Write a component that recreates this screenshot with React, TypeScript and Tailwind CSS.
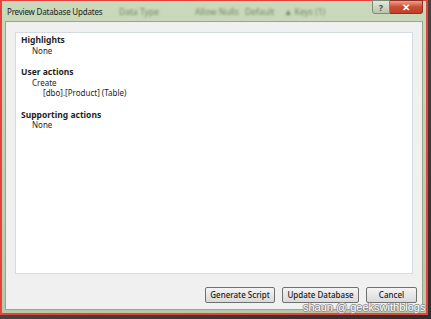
import React from "react";

export default function App() {
  const font = { fontFamily: '"Noto Sans", "Open Sans", sans-serif' };
  const btn =
    "h-[16px] rounded-[2px] border border-[#707070] bg-gradient-to-b from-[#f4f4f4] to-[#dadada] text-[8px] font-medium text-[#1a1a1a] leading-none whitespace-nowrap";
  return (
    <div
      className="relative w-[431px] h-[319px] overflow-hidden bg-gradient-to-br from-[#5a5a5a] to-[#2e2e2e]"
      style={font}
    >
      {/* window */}
      <div className="absolute left-0 top-0 w-[428px] h-[315px] border-x-2 border-b-2 border-t border-[#e8413c] bg-gradient-to-b from-[#c9d9ba] to-[#b8c9a8] flex flex-col">
        {/* title bar */}
        <div className="relative h-[20px] shrink-0 flex items-center pl-[5px]">
          <div className="absolute inset-0 pointer-events-none text-[8.5px] text-[#3b4a35] opacity-60 blur-[1.2px] whitespace-nowrap">
            <span className="absolute left-[117px] top-[5px]">Data Type</span>
            <span className="absolute left-[193px] top-[5px]">Allow Nulls</span>
            <span className="absolute left-[243px] top-[5px]">Default</span>
            <span className="absolute left-[282px] top-[5px]">▲ Keys (1)</span>
          </div>
          <span className="relative text-[8px] tracking-[-0.2px] text-[#1a1a1a] leading-none mt-[1px] whitespace-nowrap">
            Preview Database Updates
          </span>
          <div className="absolute top-[-1px] right-[3px] flex">
            <div className="w-[18px] h-[14px] rounded-bl-[3px] border border-[#7d8a73] bg-gradient-to-b from-[#e2e9dc] to-[#b9c4b0] flex items-center justify-center text-[9px] font-bold text-[#4b4b4b] leading-none">
              ?
            </div>
            <div className="w-[33px] h-[14px] rounded-br-[3px] border border-l-0 border-[#8a3324] bg-gradient-to-b from-[#e8a08e] via-[#cc4b33] to-[#c2412a] flex items-center justify-center text-[10px] font-bold text-white leading-none">
              ✕
            </div>
          </div>
        </div>
        {/* dialog body */}
        <div className="flex-1 mx-[3px] mb-[3px] bg-[#f0f0f0] border border-[#97a58c] flex flex-col">
          <div className="mx-[9px] mt-[10px] h-[242px] bg-white border border-[#d5dbe4] px-[5px] pt-[2px] text-[8px] leading-[10.5px] text-[#1e1e1e] whitespace-nowrap">
            <div className="font-bold text-[8.5px]">Highlights</div>
            <div className="pl-[11px]">None</div>
            <div className="font-bold text-[8.5px] mt-[11px]">User actions</div>
            <div className="pl-[11px]">Create</div>
            <div className="pl-[22px]">[dbo].[Product] (Table)</div>
            <div className="font-bold text-[8.5px] mt-[11px]">Supporting actions</div>
            <div className="pl-[11px]">None</div>
          </div>
          <div className="flex justify-end gap-[7px] pr-[5px] mt-[13px]">
            <button className={`w-[70px] ${btn}`}>Generate Script</button>
            <button className={`w-[77px] ${btn}`}>Update Database</button>
            <button className={`w-[51px] ${btn}`}>Cancel</button>
          </div>
        </div>
      </div>
      {/* watermark */}
      <div
        className="absolute left-[303px] top-[302px] text-[11px] leading-none text-white whitespace-nowrap"
        style={{
          fontFamily: '"Liberation Sans", sans-serif',
          textShadow: "1px 0 0 #8a8a8a, -1px 0 0 #8a8a8a, 0 1px 0 #8a8a8a, 0 -1px 0 #8a8a8a",
        }}
      >
        shaun @ geekswithblogs
      </div>
    </div>
  );
}
